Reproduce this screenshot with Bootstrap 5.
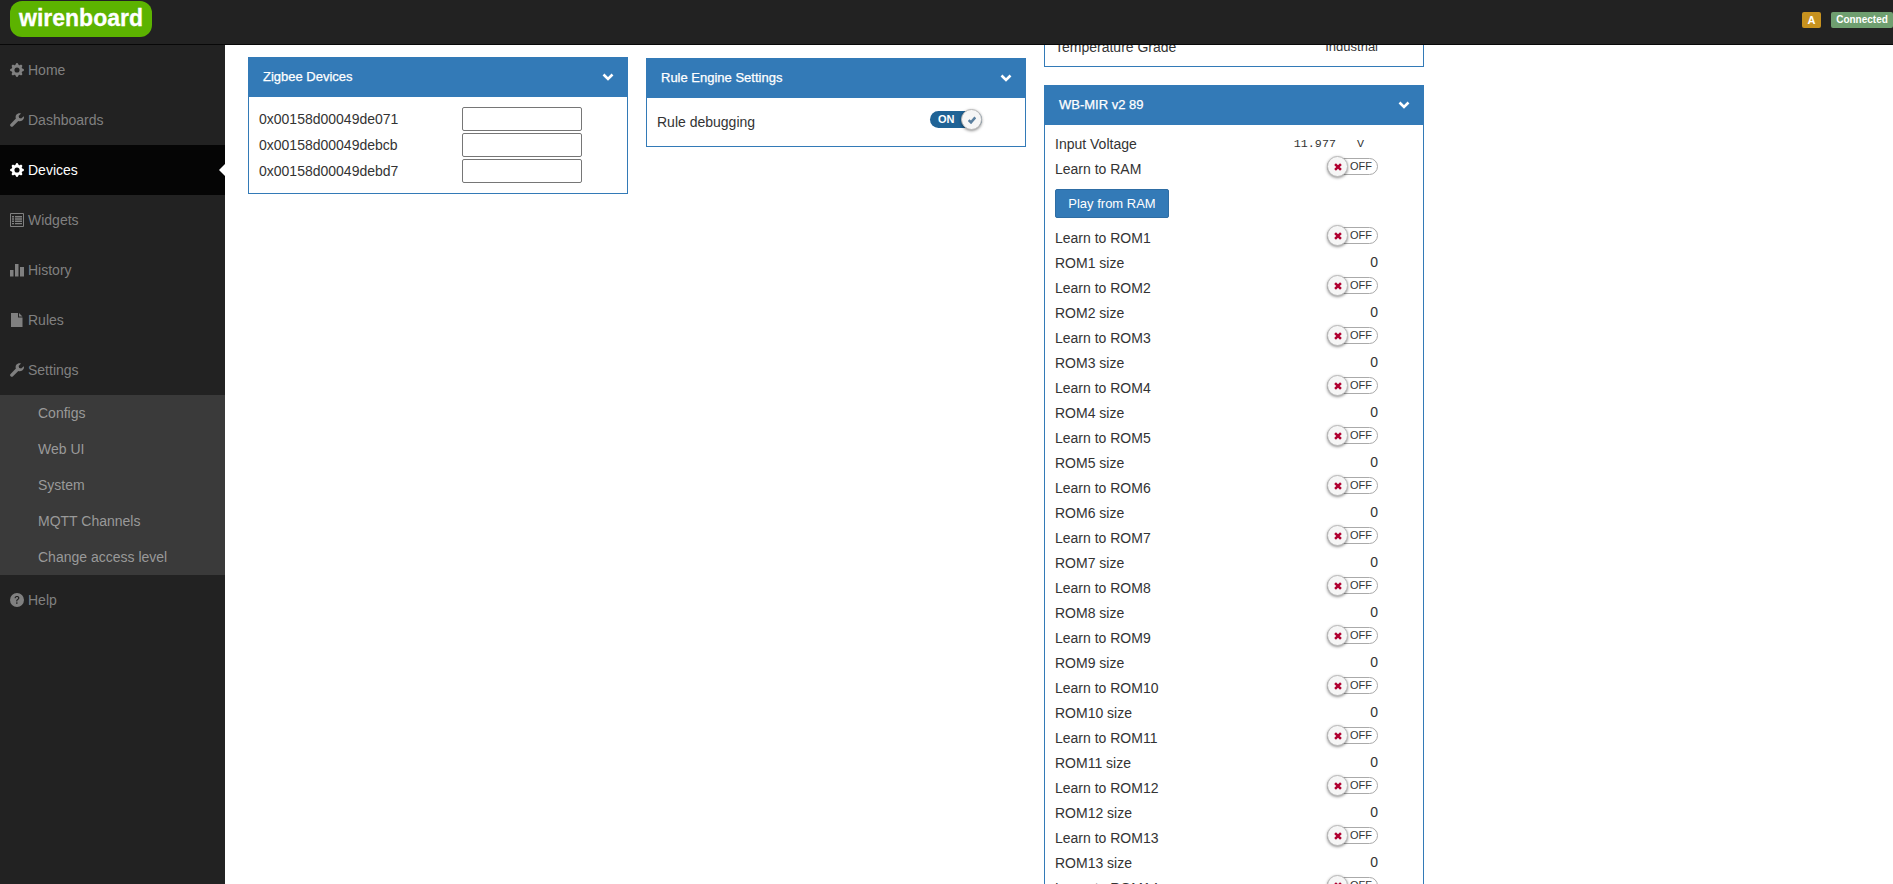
<!doctype html>
<html lang="en">
<head>
<meta charset="utf-8">
<title>Wiren Board</title>
<link href="https://cdn.jsdelivr.net/npm/bootstrap@5.3.0/dist/css/bootstrap.min.css" rel="stylesheet">
<style>
html,body{height:100%;overflow:hidden}
body{font-family:"Liberation Sans",Arial,sans-serif;font-size:14px;line-height:20px;color:#333;background:#fff}
.shell{height:884px;display:flex;flex-direction:column}
.topbar{height:45px;flex:none;background:#222;border-bottom:1px solid #080808;position:relative;z-index:2}
.logo-pill{margin:1px 0 0 10px;width:142px;height:36px;background:#5cb300;border-radius:12px;color:#fff;font-family:"Liberation Sans",sans-serif;font-weight:700;font-size:23px;line-height:35px;text-align:center;-webkit-text-stroke:.3px #fff}
.stat{height:16px;font-size:10px;line-height:16px;font-weight:700;color:#fff;border-radius:2px;text-align:center}
.stat-a{width:19px;background:#c7921f;margin-right:10px;font-size:11px}
.stat-c{width:62px;background:#6f9f70}
.side{width:225px;flex:none;background:#222}
.side-link{height:50px;display:flex;align-items:center;padding-left:10px;color:#808080;text-decoration:none;position:relative}
.side-link svg{width:14px;height:14px;margin-right:4px;fill:currentColor;flex:none}
.side-link.on{background:#050505;color:#fff}
.side-link.on::after{content:"";position:absolute;right:0;top:19px;border:6px solid transparent;border-right-color:#fff;border-left:0}
.sub{background:#3a3a3a}
.sub a{display:block;height:36px;line-height:36px;padding-left:38px;color:#999;text-decoration:none}
.work{flex:1;min-width:0;overflow:hidden;display:flex;align-items:flex-start;gap:18px;padding-left:23px}
.pillar{width:380px;flex:none}
.pane{border:1px solid #337ab7;background:#fff}
.pane-head{height:40px;margin:-1px -1px 0;background:#337ab7;color:#fff;font-size:13px;font-weight:400;-webkit-text-stroke:.25px #fff;display:flex;align-items:center;justify-content:space-between;padding:0 14px 0 15px}
.pane-head svg{width:12px;height:8px;fill:none;stroke:#fff;stroke-width:2.6}
.zig-body{padding:10px 10px 8px}
.zig-row{height:26px;display:flex;align-items:flex-start;line-height:24px}
.zig-row span{width:203px}
.zig-input{width:120px;height:24px;border:1px solid #767676;border-radius:2px;background:#fff;padding:0}
.rule-row{height:48px;padding:12px 10px 0 10px;display:flex;justify-content:space-between;line-height:24px}
.cut-top{height:22px;border-top:0;overflow:hidden;margin-bottom:18px;padding:0 10px}
.cut-top .line{margin-top:-10px}
.grade{font-size:13px}
.mir-body{padding:7px 10px 0}
.line{height:25px;display:flex;justify-content:space-between;padding-right:35px;line-height:24px}
.valnum{line-height:22px}
.mono{font-family:"Liberation Mono",monospace;font-size:11.7px;white-space:pre;color:#333}
.play{display:block;margin:7px 0 8px;width:114px;height:29px;padding:0;font-size:13px;line-height:27px;background:#337ab7;border:1px solid #2e6da4;border-radius:2px;color:#fff}
.sw{width:51px;height:17px;margin-top:1px;position:relative;flex:none;border-radius:9px;font-size:11px;font-weight:400;line-height:15px}
.sw-off{border:1px solid #aaa;background:#fff;color:#333;text-align:right;padding-right:5px}
.sw-on{width:52px;background:#1f6396;color:#fff;font-weight:700;text-align:left;padding-left:8px;line-height:17px;margin-right:33px}
.knob{position:absolute;top:-3px;width:21px;height:21px;border-radius:50%;background:#f6f6f6;border:1px solid #bbb;box-shadow:0 1px 3px rgba(0,0,0,.45);display:flex;align-items:center;justify-content:center}
.sw-off .knob{left:-1px}
.sw-on .knob{right:0;top:-2px}
.knob svg{width:8px;height:8px;fill:none;stroke-width:2.8}
</style>
</head>
<body>
<svg width="0" height="0" class="position-absolute">
<defs>
<symbol id="i-cog" viewBox="0 0 16 16"><path d="M9.405 1.05c-.413-1.4-2.397-1.4-2.81 0l-.1.34a1.464 1.464 0 0 1-2.105.872l-.31-.17c-1.283-.698-2.686.705-1.987 1.987l.169.311c.446.82.023 1.841-.872 2.105l-.34.1c-1.4.413-1.4 2.397 0 2.81l.34.1a1.464 1.464 0 0 1 .872 2.105l-.17.31c-.698 1.283.705 2.686 1.987 1.987l.311-.169a1.464 1.464 0 0 1 2.105.872l.1.34c.413 1.4 2.397 1.4 2.81 0l.1-.34a1.464 1.464 0 0 1 2.105-.872l.31.17c1.283.698 2.686-.705 1.987-1.987l-.169-.311a1.464 1.464 0 0 1 .872-2.105l.34-.1c1.4-.413 1.4-2.397 0-2.81l-.34-.1a1.464 1.464 0 0 1-.872-2.105l.17-.31c.698-1.283-.705-2.686-1.987-1.987l-.311.169a1.464 1.464 0 0 1-2.105-.872l-.1-.34zM8 10.93a2.929 2.929 0 1 1 0-5.86 2.929 2.929 0 0 1 0 5.858z"/></symbol>
<symbol id="i-wrench" viewBox="0 0 14 14"><path d="M13.8 3.2l-2.6 2.4-2-.6-.6-2L11 .4C9.3-.2 7.3.3 6.3 1.8c-.8 1.2-.9 2.6-.4 3.8L.6 10.9c-.7.7-.7 1.7 0 2.4.7.7 1.7.7 2.4 0L8.3 8c1.3.5 2.7.3 3.9-.5 1.5-1 2.1-2.7 1.6-4.3z"/></symbol>
<symbol id="i-list" viewBox="0 0 14 14"><path fill-rule="evenodd" d="M1 0h12a1 1 0 0 1 1 1v12a1 1 0 0 1-1 1H1a1 1 0 0 1-1-1V1a1 1 0 0 1 1-1zm0 1v12h12V1H1zM2 3h2v1.4H2zM5 3h7v1.4H5zM2 5.3h2v1.4H2zM5 5.3h7v1.4H5zM2 7.6h2v1.4H2zM5 7.6h7v1.4H5zM2 9.9h2v1.4H2zM5 9.9h7v1.4H5z"/></symbol>
<symbol id="i-bars" viewBox="0 0 14 14"><path d="M0 7h3.5v6.5H0zM5 1h3.5v12.5H5zM10 4h4v9.5h-4z"/></symbol>
<symbol id="i-file" viewBox="0 0 14 14"><path d="M1 0h7v4.5h4.5V14H1zM9 0l3.5 3.5H9z"/></symbol>
<symbol id="i-help" viewBox="0 0 16 16"><path d="M16 8A8 8 0 1 1 0 8a8 8 0 0 1 16 0zM5.496 6.033h.825c.138 0 .248-.113.266-.25.09-.656.54-1.134 1.342-1.134.686 0 1.314.343 1.314 1.168 0 .635-.374.927-.965 1.371-.673.489-1.206 1.06-1.168 1.987l.003.217a.25.25 0 0 0 .25.246h.811a.25.25 0 0 0 .25-.25v-.105c0-.718.273-.927 1.01-1.486.609-.463 1.244-.977 1.244-2.056 0-1.511-1.276-2.241-2.673-2.241-1.267 0-2.655.59-2.75 2.286a.237.237 0 0 0 .241.247zm2.325 6.443c.61 0 1.029-.394 1.029-.927 0-.552-.42-.94-1.029-.94-.584 0-1.009.388-1.009.94 0 .533.425.927 1.01.927z"/></symbol>
<symbol id="i-chev" viewBox="0 0 12 8"><path d="M1.5 1.5 6 6l4.5-4.5"/></symbol>
<symbol id="i-x" viewBox="0 0 9 9"><path d="M1.2 1.2l6.6 6.6M7.8 1.2L1.2 7.8" stroke="#b00030"/></symbol>
<symbol id="i-check" viewBox="0 0 9 9"><path d="M.8 4.6 3.4 7.2 8.2 1.6" stroke="#5b7f9e"/></symbol>
</defs>
</svg>
<div class="shell">
  <nav class="topbar d-flex justify-content-between align-items-start">
    <div class="logo-pill">wirenboard</div>
    <div class="d-flex" style="margin-top:12px">
      <div class="stat stat-a">A</div>
      <div class="stat stat-c">Connected</div>
    </div>
  </nav>
  <div class="d-flex flex-grow-1 overflow-hidden">
    <aside class="side">
      <a class="side-link" href="#"><svg><use href="#i-cog"/></svg>Home</a>
      <a class="side-link" href="#"><svg><use href="#i-wrench"/></svg>Dashboards</a>
      <a class="side-link on" href="#"><svg><use href="#i-cog"/></svg>Devices</a>
      <a class="side-link" href="#"><svg><use href="#i-list"/></svg>Widgets</a>
      <a class="side-link" href="#"><svg><use href="#i-bars"/></svg>History</a>
      <a class="side-link" href="#"><svg><use href="#i-file"/></svg>Rules</a>
      <a class="side-link" href="#"><svg><use href="#i-wrench"/></svg>Settings</a>
      <div class="sub">
        <a href="#">Configs</a>
        <a href="#">Web UI</a>
        <a href="#">System</a>
        <a href="#">MQTT Channels</a>
        <a href="#">Change access level</a>
      </div>
      <a class="side-link" href="#"><svg><use href="#i-help"/></svg>Help</a>
    </aside>
    <main class="work">
      <div class="pillar" style="margin-top:12px">
        <section class="pane">
          <div class="pane-head">Zigbee Devices<svg><use href="#i-chev"/></svg></div>
          <div class="zig-body">
            <div class="zig-row"><span>0x00158d00049de071</span><input class="zig-input" type="text"></div>
            <div class="zig-row"><span>0x00158d00049debcb</span><input class="zig-input" type="text"></div>
            <div class="zig-row"><span>0x00158d00049debd7</span><input class="zig-input" type="text"></div>
          </div>
        </section>
      </div>
      <div class="pillar" style="margin-top:13px">
        <section class="pane">
          <div class="pane-head">Rule Engine Settings<svg><use href="#i-chev"/></svg></div>
          <div class="rule-row">Rule debugging<div class="sw sw-on">ON<span class="knob"><svg><use href="#i-check"/></svg></span></div></div>
        </section>
      </div>
      <div class="pillar">
        <section class="pane cut-top"><div class="line"><span>Temperature Grade</span><span class="grade">Industrial</span></div></section>
        <section class="pane">
          <div class="pane-head">WB-MIR v2 89<svg><use href="#i-chev"/></svg></div>
          <div class="mir-body">
            <div class="line"><span>Input Voltage</span><span class="mono">11.977   V  </span></div>
            <div class="line"><span>Learn to RAM</span><div class="sw sw-off">OFF<span class="knob"><svg><use href="#i-x"/></svg></span></div></div>
            <button class="play" type="button">Play from RAM</button>
            <div class="line"><span>Learn to ROM1</span><div class="sw sw-off">OFF<span class="knob"><svg><use href="#i-x"/></svg></span></div></div>
            <div class="line"><span>ROM1 size</span><span class="valnum">0</span></div>
            <div class="line"><span>Learn to ROM2</span><div class="sw sw-off">OFF<span class="knob"><svg><use href="#i-x"/></svg></span></div></div>
            <div class="line"><span>ROM2 size</span><span class="valnum">0</span></div>
            <div class="line"><span>Learn to ROM3</span><div class="sw sw-off">OFF<span class="knob"><svg><use href="#i-x"/></svg></span></div></div>
            <div class="line"><span>ROM3 size</span><span class="valnum">0</span></div>
            <div class="line"><span>Learn to ROM4</span><div class="sw sw-off">OFF<span class="knob"><svg><use href="#i-x"/></svg></span></div></div>
            <div class="line"><span>ROM4 size</span><span class="valnum">0</span></div>
            <div class="line"><span>Learn to ROM5</span><div class="sw sw-off">OFF<span class="knob"><svg><use href="#i-x"/></svg></span></div></div>
            <div class="line"><span>ROM5 size</span><span class="valnum">0</span></div>
            <div class="line"><span>Learn to ROM6</span><div class="sw sw-off">OFF<span class="knob"><svg><use href="#i-x"/></svg></span></div></div>
            <div class="line"><span>ROM6 size</span><span class="valnum">0</span></div>
            <div class="line"><span>Learn to ROM7</span><div class="sw sw-off">OFF<span class="knob"><svg><use href="#i-x"/></svg></span></div></div>
            <div class="line"><span>ROM7 size</span><span class="valnum">0</span></div>
            <div class="line"><span>Learn to ROM8</span><div class="sw sw-off">OFF<span class="knob"><svg><use href="#i-x"/></svg></span></div></div>
            <div class="line"><span>ROM8 size</span><span class="valnum">0</span></div>
            <div class="line"><span>Learn to ROM9</span><div class="sw sw-off">OFF<span class="knob"><svg><use href="#i-x"/></svg></span></div></div>
            <div class="line"><span>ROM9 size</span><span class="valnum">0</span></div>
            <div class="line"><span>Learn to ROM10</span><div class="sw sw-off">OFF<span class="knob"><svg><use href="#i-x"/></svg></span></div></div>
            <div class="line"><span>ROM10 size</span><span class="valnum">0</span></div>
            <div class="line"><span>Learn to ROM11</span><div class="sw sw-off">OFF<span class="knob"><svg><use href="#i-x"/></svg></span></div></div>
            <div class="line"><span>ROM11 size</span><span class="valnum">0</span></div>
            <div class="line"><span>Learn to ROM12</span><div class="sw sw-off">OFF<span class="knob"><svg><use href="#i-x"/></svg></span></div></div>
            <div class="line"><span>ROM12 size</span><span class="valnum">0</span></div>
            <div class="line"><span>Learn to ROM13</span><div class="sw sw-off">OFF<span class="knob"><svg><use href="#i-x"/></svg></span></div></div>
            <div class="line"><span>ROM13 size</span><span class="valnum">0</span></div>
            <div class="line"><span>Learn to ROM14</span><div class="sw sw-off">OFF<span class="knob"><svg><use href="#i-x"/></svg></span></div></div>
          </div>
        </section>
      </div>
    </main>
  </div>
</div>
<script src="https://cdn.jsdelivr.net/npm/bootstrap@5.3.0/dist/js/bootstrap.bundle.min.js"></script>
</body>
</html>
